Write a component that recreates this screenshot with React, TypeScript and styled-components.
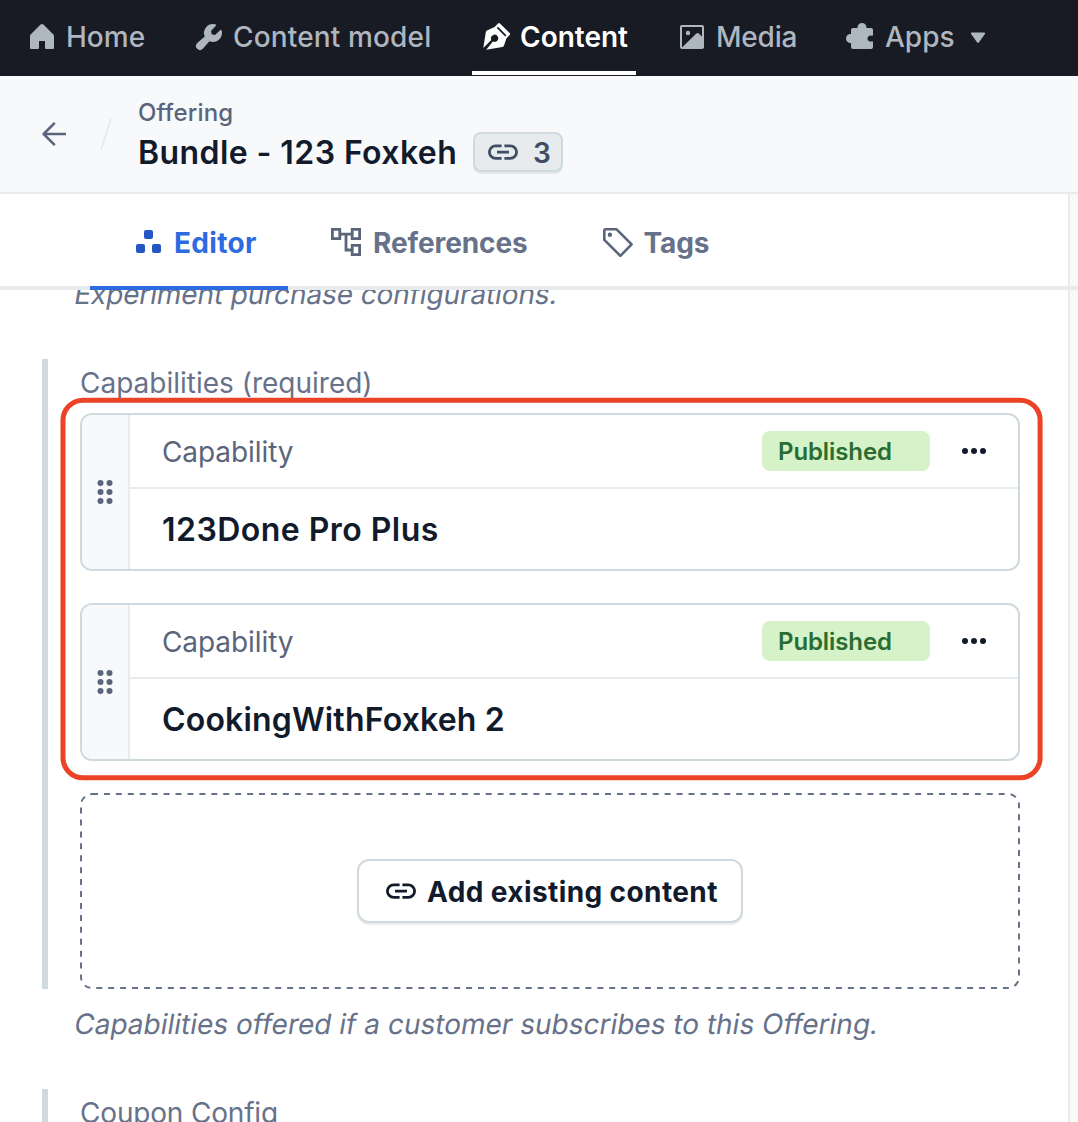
import React from "react";
import styled, { createGlobalStyle } from "styled-components";
import { PiHouseFill, PiWrenchFill, PiPuzzlePieceFill } from "react-icons/pi";

const GlobalStyle = createGlobalStyle`
  *, *::before, *::after { box-sizing: border-box; }
  body {
    margin: 0;
    background: #ffffff;
    font-family: Inter, "Liberation Sans", sans-serif;
    color: #111b2b;
    overflow: hidden;
  }
`;

const Screen = styled.div`
  display: flex;
  flex-direction: column;
  width: 1078px;
  height: 1122px;
  overflow: hidden;
  background: #ffffff;
`;

/* Top navigation */

const NavBar = styled.nav`
  display: flex;
  flex: none;
  gap: 32px;
  height: 76px;
  padding-left: 18px;
  background: #181b24;
`;

const NavItem = styled.a<{ $width: number; $active?: boolean }>`
  display: flex;
  align-items: center;
  gap: 8px;
  width: ${(p) => p.$width}px;
  height: 75px;
  padding: 2px 0 0 8px;
  border-bottom: 4px solid ${(p) => (p.$active ? "#ffffff" : "transparent")};
  color: ${(p) => (p.$active ? "#ffffff" : "#aeb6bf")};
  font-size: 28px;
  font-weight: ${(p) => (p.$active ? 600 : 500)};
  line-height: 40px;
  white-space: nowrap;

  svg { flex: none; }
`;

const NavLabel = styled.span<{ $spacing: number }>`
  letter-spacing: ${(p) => p.$spacing}px;
`;

const CaretSlot = styled.span`
  display: flex;
  margin: 2px 0 0 7px;
`;

/* Entry header */

const EntryHeader = styled.header`
  display: flex;
  flex: none;
  align-items: flex-start;
  height: 118px;
  padding-left: 38px;
  background: #f7f9fb;
  border-bottom: 2px solid #e7ebee;
`;

const BackButton = styled.span`
  display: flex;
  margin-top: 42px;
  color: #5a657c;
`;

const Slash = styled.span`
  display: flex;
  margin: 42px 0 0 30px;
`;

const Titles = styled.div`
  display: flex;
  flex-direction: column;
  margin: 21px 0 0 26px;
`;

const ContentType = styled.span`
  font-size: 24px;
  font-weight: 500;
  line-height: 32px;
  letter-spacing: 0.15px;
  color: #5a657c;
`;

const TitleRow = styled.div`
  display: flex;
  align-items: flex-start;
  height: 48px;
`;

const EntryTitle = styled.h1`
  width: 335px;
  margin: 0;
  font-size: 32px;
  font-weight: 600;
  line-height: 48px;
  letter-spacing: 0.42px;
  white-space: nowrap;
`;

const LinkCount = styled.span`
  display: flex;
  align-items: center;
  gap: 14px;
  width: 90px;
  height: 40px;
  margin-top: 3px;
  padding: 0 0 0 12px;
  border: 2px solid #cfd9e0;
  border-radius: 8px;
  background: #e7ebee;
  box-shadow: 0 2px 0 rgba(25, 37, 50, 0.08);
  color: #414d63;
  font-size: 28px;
  font-weight: 600;
`;

const CountValue = styled.span`
  padding-top: 2px;
`;

/* Tabs */

const Workbench = styled.div`
  display: flex;
  flex: 1;
  min-height: 0;
`;

const Main = styled.main`
  display: flex;
  flex-direction: column;
  width: 1068px;
  min-height: 0;
`;

const Sidebar = styled.aside`
  width: 10px;
  border-left: 2px solid #e7ebee;
  background: linear-gradient(#e7ebee, #e7ebee) 0 92px / 100% 4px no-repeat #f7f9fb;
`;

const TabList = styled.div`
  display: flex;
  flex: none;
  gap: 1px;
  height: 96px;
  padding-left: 90px;
  box-shadow: inset 0 -4px 0 #e7ebee;
`;

const Tab = styled.div<{ $width: number; $gap?: number; $active?: boolean }>`
  display: flex;
  align-items: center;
  gap: ${(p) => p.$gap ?? 11}px;
  width: ${(p) => p.$width}px;
  padding: 6px 0 0 41px;
  border-bottom: 4px solid ${(p) => (p.$active ? "#2e6be0" : "transparent")};
  color: ${(p) => (p.$active ? "#2e6be0" : "#67728a")};
  font-size: 28px;
  font-weight: 700;
  letter-spacing: ${(p) => (p.$active ? 0.3 : -0.1)}px;
  white-space: nowrap;

  svg { flex: none; }
`;

/* Editor fields */

const Fields = styled.section`
  flex: 1;
  min-height: 0;
  overflow: hidden;
  color: #67728a;
  font-size: 28px;
`;

/* Slants the upright face, so the letters keep their roman shapes. */
const HelpText = styled.p<{ $top: number; $spacing: number }>`
  width: max-content;
  margin: ${(p) => p.$top}px 0 0 73px;
  line-height: 40px;
  letter-spacing: ${(p) => p.$spacing}px;
  white-space: nowrap;
  transform: skewX(-9.4deg);
  transform-origin: 0 30px;
`;

const Field = styled.div<{ $top: number }>`
  margin: ${(p) => p.$top}px 48px 0 42px;
  padding-left: 32px;
  border-left: 6px solid #cfd9e0;
`;

const FieldLabel = styled.div<{ $spacing: number }>`
  height: 54px;
  padding-top: 4px;
  line-height: 40px;
  letter-spacing: ${(p) => p.$spacing}px;
`;

const CardList = styled.div`
  position: relative;
  display: flex;
  flex-direction: column;
  gap: 32px;
`;

const Highlight = styled.svg`
  position: absolute;
  left: -20px;
  top: -16px;
  pointer-events: none;
`;

const Card = styled.article`
  display: flex;
  height: 158px;
  border: 2px solid #cfd9e0;
  border-radius: 12px;
  background: #ffffff;
  overflow: hidden;
`;

const DragHandle = styled.div`
  display: flex;
  align-items: center;
  justify-content: center;
  width: 48px;
  background: #f7f9fb;
  border-right: 2px solid #e7ebee;
`;

const CardBody = styled.div`
  display: flex;
  flex: 1;
  flex-direction: column;
`;

const CardHeader = styled.div`
  display: flex;
  align-items: center;
  height: 74px;
  padding: 0 32px;
  border-bottom: 2px solid #e7ebee;
`;

const CardType = styled.span`
  flex: 1;
  padding-top: 2px;
  color: #5a657c;
  letter-spacing: -0.08px;
`;

const Badge = styled.span`
  width: 168px;
  height: 40px;
  margin-right: 32px;
  padding-left: 16px;
  border-radius: 8px;
  background: #d5f2c8;
  color: #2a6c31;
  font-size: 24px;
  font-weight: 600;
  line-height: 41px;
  letter-spacing: -0.1px;
`;

const CardTitle = styled.div<{ $spacing: number }>`
  padding: 17px 32px 0;
  color: #111b2b;
  font-size: 32px;
  font-weight: 600;
  line-height: 48px;
  letter-spacing: ${(p) => p.$spacing}px;
`;

const DropZone = styled.div`
  position: relative;
  display: flex;
  align-items: center;
  justify-content: center;
  height: 196px;
  margin-top: 32px;
`;

const DashedFrame = styled.svg`
  position: absolute;
  inset: 0;
`;

const AddButton = styled.button`
  position: relative;
  display: flex;
  align-items: center;
  gap: 10px;
  width: 386px;
  height: 64px;
  padding: 0 0 0 26px;
  border: 2px solid #cfd9e0;
  border-radius: 12px;
  background: #ffffff;
  box-shadow: 0 2px 0 rgba(25, 37, 50, 0.08);
  color: #111b2b;
  font: 700 28px Inter, "Liberation Sans", sans-serif;
  letter-spacing: 0.4px;
  white-space: nowrap;
`;

const AddLabel = styled.span`
  padding-top: 2px;
`;

const BackIcon = () => (
  <svg width="32" height="32" viewBox="0 0 32 32" fill="none" stroke="currentColor" strokeWidth="2.5" strokeLinejoin="round">
    <path d="M28 16H5.6M16.8 4.8L5.6 16l11.2 11.2" />
  </svg>
);

const PenNibIcon = () => (
  <svg width="32" height="32" viewBox="0 0 32 32">
    <path
      d="M18 2.4a1.4 1.4 0 0 1 2 0L29.6 12a1.4 1.4 0 0 1 0 2L26.4 17.4 24 24.6a2 2 0 0 1-1.6 1.4L6.2 28.8 12.9 20.6a3.7 3.7 0 1 0-1.6-1.6L3.3 27 5.8 11.2A2 2 0 0 1 7 9.5L14.6 6z"
      fill="currentColor"
    />
    <path d="M17.4 6.4L25.8 14.8" stroke="#181b24" strokeWidth="1.8" />
  </svg>
);

const ImageIcon = () => (
  <svg width="32" height="32" viewBox="0 0 32 32">
    <rect x="5" y="5" width="22" height="22" rx="1" fill="none" stroke="currentColor" strokeWidth="2" />
    <circle cx="12" cy="12" r="2.2" fill="currentColor" />
    <path d="M5.5 27 L20.3 12.6 a1.8 1.8 0 0 1 2.5 0 L27.5 17 V27z" fill="currentColor" />
  </svg>
);

const CaretIcon = () => (
  <svg width="16" height="14" viewBox="0 0 16 14">
    <path d="M1.8 1.5h12.4a.9.9 0 0 1 .7 1.5L9 11.3a1.3 1.3 0 0 1-2 0L1.1 3A.9.9 0 0 1 1.8 1.5z" fill="currentColor" />
  </svg>
);

const LinkIcon = () => (
  <svg width="32" height="32" viewBox="0 0 32 32" fill="none" stroke="currentColor" strokeWidth="2.8">
    <path d="M14.6 9.8 H8.7 a6.3 6.3 0 0 0 0 12.6 H14.6 M17.4 9.8 H23.3 a6.3 6.3 0 0 1 0 12.6 H17.4 M10 16.1 H22" />
  </svg>
);

const EditorIcon = () => (
  <svg width="32" height="32" viewBox="0 0 32 32" fill="#2457c4">
    <rect x="13" y="3" width="9" height="9" rx="2" />
    <rect x="5" y="17" width="9" height="9" rx="2" />
    <rect x="21" y="17" width="9" height="9" rx="2" />
  </svg>
);

const ReferencesIcon = () => (
  <svg width="32" height="32" viewBox="0 0 32 32" fill="none" stroke="#5a657c" strokeWidth="2.8">
    <path d="M2.4 2.4h7.4v9.2H2.4zM22.2 2.4h7.4v9.2h-7.4zM22.2 18.4h7.4v9.2h-7.4zM10 7.2h12M16 7.2v15.8h6" />
  </svg>
);

const TagIcon = () => (
  <svg width="32" height="32" viewBox="0 0 32 32">
    <path
      d="M3.3 2.3H14.6L29.6 17.3 18.4 28.8 2.3 12.9V3.3a1 1 0 0 1 1-1z"
      fill="none"
      stroke="#5a657c"
      strokeWidth="2.6"
      strokeLinejoin="round"
    />
    <circle cx="7.9" cy="7.8" r="2.2" fill="#5a657c" />
  </svg>
);

const GripIcon = () => (
  <svg width="16" height="24" viewBox="0 0 16 24" fill="#5a657c">
    {[3, 12, 21].map((y) => (
      <React.Fragment key={y}>
        <circle cx="3.5" cy={y} r="3" />
        <circle cx="12.5" cy={y} r="3" />
      </React.Fragment>
    ))}
  </svg>
);

const MoreIcon = () => (
  <svg width="24" height="6" viewBox="0 0 24 6" fill="#111b2b">
    <circle cx="3" cy="3" r="3" />
    <circle cx="12" cy="3" r="3" />
    <circle cx="21" cy="3" r="3" />
  </svg>
);

const CapabilityCard = ({ title, spacing }: { title: string; spacing: number }) => (
  <Card>
    <DragHandle>
      <GripIcon />
    </DragHandle>
    <CardBody>
      <CardHeader>
        <CardType>Capability</CardType>
        <Badge>Published</Badge>
        <MoreIcon />
      </CardHeader>
      <CardTitle $spacing={spacing}>{title}</CardTitle>
    </CardBody>
  </Card>
);

export default function App() {
  return (
    <Screen>
      <GlobalStyle />
      <NavBar>
        <NavItem $width={135}>
          <PiHouseFill size={32} />
          <NavLabel $spacing={0}>Home</NavLabel>
        </NavItem>
        <NavItem $width={255}>
          <PiWrenchFill size={32} />
          <NavLabel $spacing={0.15}>Content model</NavLabel>
        </NavItem>
        <NavItem $width={164} $active>
          <PenNibIcon />
          <NavLabel $spacing={0}>Content</NavLabel>
        </NavItem>
        <NavItem $width={137}>
          <ImageIcon />
          <NavLabel $spacing={-0.2}>Media</NavLabel>
        </NavItem>
        <NavItem $width={156}>
          <PiPuzzlePieceFill size={32} />
          <NavLabel $spacing={0}>Apps</NavLabel>
          <CaretSlot>
            <CaretIcon />
          </CaretSlot>
        </NavItem>
      </NavBar>

      <EntryHeader>
        <BackButton>
          <BackIcon />
        </BackButton>
        <Slash>
          <svg width="12" height="32" viewBox="0 0 12 32">
            <path d="M1.3 31L11 1" stroke="#e7ebee" strokeWidth="2" />
          </svg>
        </Slash>
        <Titles>
          <ContentType>Offering</ContentType>
          <TitleRow>
            <EntryTitle>Bundle - 123 Foxkeh</EntryTitle>
            <LinkCount>
              <LinkIcon />
              <CountValue>3</CountValue>
            </LinkCount>
          </TitleRow>
        </Titles>
      </EntryHeader>

      <Workbench>
        <Main>
          <TabList>
            <Tab $width={198} $active>
              <EditorIcon />
              Editor
            </Tab>
            <Tab $width={271}>
              <ReferencesIcon />
              References
            </Tab>
            <Tab $width={200} $gap={9.5}>
              <TagIcon />
              Tags
            </Tab>
          </TabList>
          <Fields>
            <HelpText $top={-16} $spacing={-0.12}>
              Experiment purchase configurations.
            </HelpText>
            <Field $top={45}>
              <FieldLabel $spacing={0}>Capabilities (required)</FieldLabel>
              <CardList>
                <CapabilityCard title="123Done Pro Plus" spacing={0.46} />
                <CapabilityCard title="CookingWithFoxkeh 2" spacing={0.18} />
                <Highlight width="984" height="388" viewBox="0 0 984 388">
                  <rect x="3" y="3.2" width="977.1" height="377.6" rx="20" fill="none" stroke="#ec4226" strokeWidth="5" />
                </Highlight>
              </CardList>
              <DropZone>
                <DashedFrame width="940" height="196" viewBox="0 0 940 196">
                  <rect x="1" y="1" width="938" height="194" rx="11" fill="none" stroke="#67728a" strokeWidth="2" strokeDasharray="6 5.93" />
                </DashedFrame>
                <AddButton>
                  <LinkIcon />
                  <AddLabel>Add existing content</AddLabel>
                </AddButton>
              </DropZone>
            </Field>
            <HelpText $top={15} $spacing={0}>
              Capabilities offered if a customer subscribes to this Offering.
            </HelpText>
            <Field $top={45}>
              <FieldLabel $spacing={-0.18}>Coupon Config</FieldLabel>
            </Field>
          </Fields>
        </Main>
        <Sidebar />
      </Workbench>
    </Screen>
  );
}
